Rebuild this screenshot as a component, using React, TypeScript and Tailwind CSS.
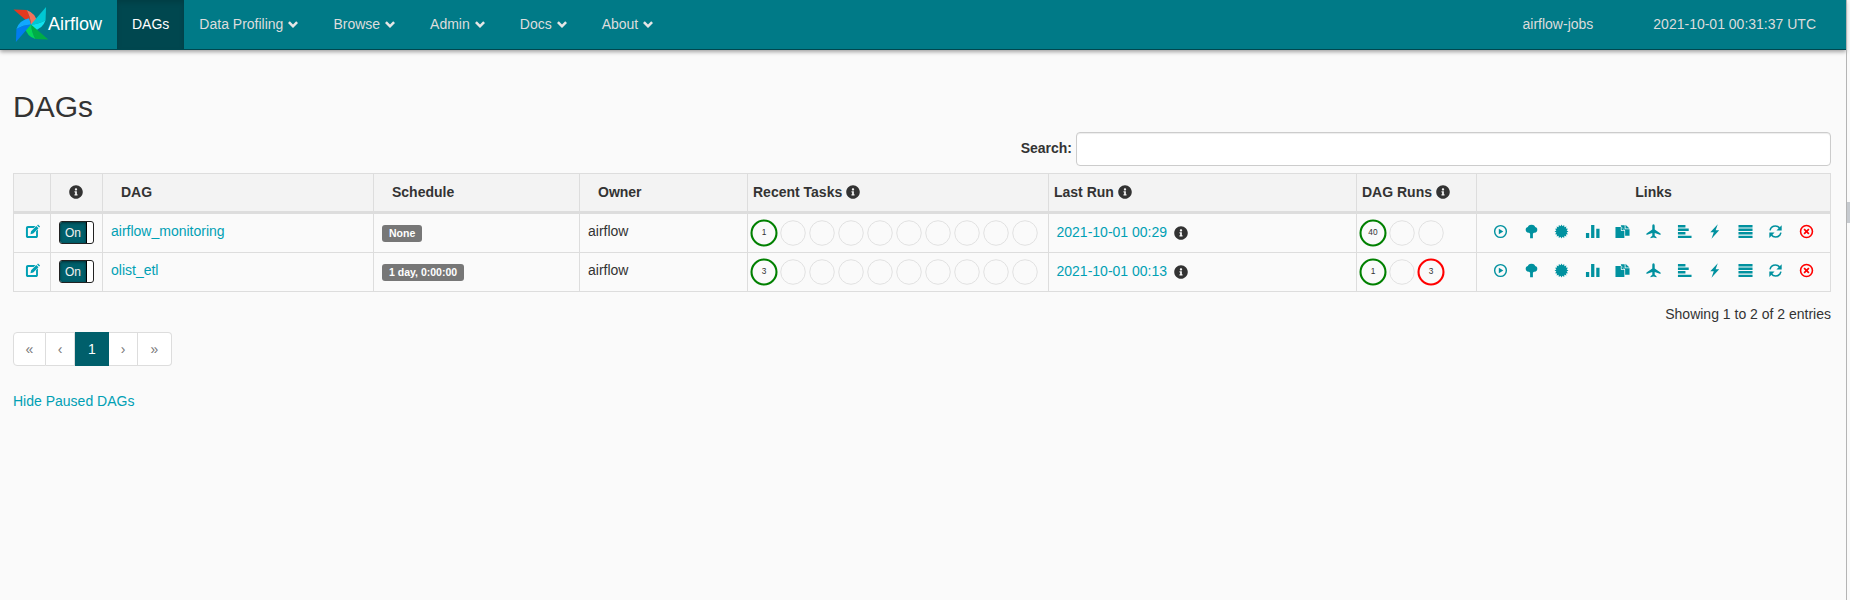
import React from "react";
import { FaInfoCircle } from "react-icons/fa";

const font = "font-['Liberation_Sans',Arial,sans-serif]";
const teal = "text-[#00a0b4]";

const Info = ({ className = "" }: { className?: string }) => (
  <FaInfoCircle className={`inline-block w-[14px] h-[14px] text-[#333] ${className}`} />
);

const NavItem = ({ label, caret, active }: { label: string; caret?: boolean; active?: boolean }) => (
  <div className={`h-[49px] flex items-center pl-[15px] text-[14px] ${caret ? "pr-[18px]" : "pr-[15px]"} ${active ? "bg-[#00474f] text-white shadow-[inset_0_3px_5px_#00000020]" : "text-[#dddddd]"}`}>
    {label}
    {caret && (
      <svg viewBox="0 0 14 14" className="w-[14px] h-[14px] ml-[3px] text-[#e6e6e6]" fill="currentColor">
        <polygon points="2,5 3.800,3.200 7,6.400 10.200,3.200 12,5 7,10" />
      </svg>
    )}
  </div>
);

const Blade = ({ angle, dark, light }: { angle: number; dark: string; light: string }) => (
  <g transform={`rotate(${angle} 18.500 18)`}>
    <path d="M18.500 18 L0.500 2.500 L14 3 Q18 10 18.500 18 Z" fill={dark} />
    <path d="M14 3 Q23 6 25 16 L18.500 18 Q18 10 14 3 Z" fill={light} />
  </g>
);

const Logo = () => (
  <svg viewBox="0 0 36 36" className="w-[35px] h-[35px] shrink-0">
    <Blade angle={0} dark="#e43921" light="#f4725b" />
    <Blade angle={90} dark="#00c7d4" light="#11e1ee" />
    <Blade angle={180} dark="#00ad46" light="#04d659" />
    <Blade angle={270} dark="#017cee" light="#11a8ff" />
  </svg>
);

const Circle = ({ n, color }: { n?: string; color?: "g" | "r" }) => (
  <div
    className={`w-[26px] h-[26px] shrink-0 rounded-full flex items-center justify-center text-[8px] text-[#333] ${
      color === "g"
        ? "border-2 border-[#008000] scale-[1.04]"
        : color === "r"
        ? "border-2 border-[#ff0000] scale-[1.04]"
        : "border border-[#e0e0e0] scale-[0.98]"
    }`}
  >
    {n}
  </div>
);

const Glyph = ({ children, red }: { children: React.ReactNode; red?: boolean }) => (
  <svg viewBox="0 0 16 16" className={`w-[15px] h-[15px] shrink-0 ${red ? "text-[#ff0000]" : "text-[#00919f]"}`} fill="currentColor">
    {children}
  </svg>
);

const burst = Array.from({ length: 32 })
  .map((_, i) => {
    const r = i % 2 === 0 ? 7.4 : 5.6;
    const a = (i * Math.PI) / 16;
    return `${(8 + r * Math.cos(a)).toFixed(2)},${(8 + r * Math.sin(a)).toFixed(2)}`;
  })
  .join(" ");

const links = [
  <Glyph key="1"><path fillRule="evenodd" d="M8 1a7 7 0 1 0 0 14A7 7 0 0 0 8 1Zm0 1.500a5.500 5.500 0 1 1 0 11 5.500 5.500 0 0 1 0-11Z" /><path d="M6.200 5v6L11 8Z" /></Glyph>,
  <Glyph key="2">
    <circle cx="8" cy="4.900" r="4.200" />
    <circle cx="4.800" cy="6.200" r="3" />
    <circle cx="11.200" cy="6.200" r="3" />
    <circle cx="8" cy="7.500" r="3" />
    <path d="M6.500 9h3v6.200h-3Z" />
  </Glyph>,
  <Glyph key="3"><polygon points={burst} /></Glyph>,
  <Glyph key="4"><path d="M1 9.500h3.500V15H1Zm5.500-8.500H10v14H6.500Zm5.500 4h3.500v10H12Z" /></Glyph>,
  <Glyph key="5"><path d="M.5 3.200h5.700v3.400c0 .5.400.9.900.9h2.900V15H.5Z" /><path d="M7 3.200l2.800 3.400H7Z" /><path d="M6.300 1.200h4v4.400h5.200v6.900h-4.700V6.800L6.300 2.300Z" /><path d="M11.200.8l4.200 3.900h-4.200Z" /></Glyph>,
  <Glyph key="6"><path d="M8 .2c.9 0 1.300 1 1.300 2.100V5.800L15.500 10v1.800L9.300 9.600v3L11.200 14v1.300L8 14.400l-3.200.9V14l1.900-1.400v-3L.5 11.800V10l6.200-4.200V2.300C6.700 1.200 7.100.2 8 .2Z" /></Glyph>,
  <Glyph key="7"><path d="M1 1h8v2.600H1Zm0 3.800h11.500v2.600H1Zm0 3.800h8v2.600H1Zm0 3.800h14.500V15H1Z" /></Glyph>,
  <Glyph key="8"><path d="M11.500.3 3.500 8.800h3.700L4.800 15.700 13 6.600H9.200Z" /></Glyph>,
  <Glyph key="9"><path d="M.5 1h15v2.600H.5Zm0 3.800h15v2.600H.5Zm0 3.800h15v2.600H.5Zm0 3.800h15V15H.5Z" /></Glyph>,
  <Glyph key="10">
    <path d="M2.200 6.800C2.800 4 5.200 2.200 8 2.200c1.800 0 3.300.7 4.300 2" fill="none" stroke="currentColor" strokeWidth="1.700" />
    <path d="M14.600 1.200V7H9Z" />
    <path d="M13.800 9.200C13.200 12 10.800 13.800 8 13.800c-1.800 0-3.300-.7-4.300-2" fill="none" stroke="currentColor" strokeWidth="1.700" />
    <path d="M1.400 14.800V9H7Z" />
  </Glyph>,
  <Glyph key="11" red><path fillRule="evenodd" d="M8 .8a7.200 7.200 0 1 0 0 14.400A7.200 7.200 0 0 0 8 .8Zm0 1.700a5.500 5.500 0 1 1 0 11 5.500 5.500 0 0 1 0-11Z" /><path d="M6.100 4.800 8 6.700l1.900-1.900 1.300 1.300L9.300 8l1.900 1.900-1.300 1.300L8 9.300l-1.900 1.900-1.300-1.300L6.700 8 4.800 6.100Z" /></Glyph>,
];

const th = "border border-[#ddd] border-b-[3px] bg-[#f3f3f3] font-bold text-[14px] text-[#333] py-0 align-middle";
const td = "border border-[#ddd] text-[14px] text-[#333] align-middle p-0";

const Row = ({ name, sched, task, last, runs }: { name: string; sched: string; task: string; last: string; runs: React.ReactNode }) => (
  <tr className="h-[39.500px]">
    <td className={`${td} text-center`}>
      <svg viewBox="0 0 16 16" className={`inline-block w-[15px] h-[15px] ${teal} relative top-[-2px]`} fill="currentColor">
        <path d="M3 2.200h8.200L9.200 4.200H3.600c-.3 0-.5.2-.5.500v7.700c0 .3.200.5.500.5h7.700c.3 0 .5-.2.500-.5V7.600l2-2v7.400c0 1.100-.9 2-2 2H3c-1.100 0-2-.9-2-2V4.200c0-1.100.9-2 2-2Z" />
        <path d="M5.800 10.800l.7-3 5.600-5.600 2.300 2.300-5.600 5.600ZM12.900 1.500l1-1 2.200 2.200-1 1Z" />
      </svg>
    </td>
    <td className={`${td} text-center`}>
      <div className="inline-flex w-[35px] h-[23px] rounded-[3px] border border-[#222] bg-white overflow-hidden align-middle">
        <div className="w-[27px] h-full bg-[#005f6b] border-r border-black text-[#f0f0f0] text-[12px] flex items-center justify-center shadow-[inset_0_1px_3px_#00000080]">On</div>
      </div>
    </td>
    <td className={`${td} pl-[8px] pb-[2px]`}><span className={teal}>{name}</span></td>
    <td className={`${td} pl-[8px]`}>
      <span className="inline-block bg-[#777] text-white font-bold text-[10.500px] leading-[17px] h-[17px] px-[7px] rounded-[3px] align-middle">{sched}</span>
    </td>
    <td className={`${td} pl-[8px] pb-[2px]`}>airflow</td>
    <td className={`${td} pl-[3px]`}>
      <div className="flex gap-[3px]">
        <Circle n={task} color="g" />
        {Array.from({ length: 9 }).map((_, i) => <Circle key={i} />)}
      </div>
    </td>
    <td className={`${td} pl-[7.500px]`}>
      <span className={teal}>{last}</span>
      <Info className="ml-[7px] relative top-[-1px]" />
    </td>
    <td className={`${td} pl-[3px]`}><div className="flex gap-[3px]">{runs}</div></td>
    <td className={`${td} pb-[3px]`}>
      <div className="flex justify-between pl-[16px] pr-[16px]">{links}</div>
    </td>
  </tr>
);

export default function App() {
  return (
    <div className={`${font} flex min-h-[600px] bg-[#fafafa] text-[#333] overflow-hidden`}>
      <div className="w-[1846px] shrink-0">
        <nav className="h-[50px] bg-[#007a87] border-b border-[#00474f] shadow-[0_2px_4px_#00000059] flex items-center">
          <div className="flex items-center w-[117px] pl-[13px]">
            <Logo />
            <span className="text-[18px] text-white">Airflow</span>
          </div>
          <NavItem label="DAGs" active />
          <NavItem label="Data Profiling" caret />
          <NavItem label="Browse" caret />
          <NavItem label="Admin" caret />
          <NavItem label="Docs" caret />
          <NavItem label="About" caret />
          <div className="ml-auto flex text-[14px] text-[#dcdcdc]">
            <span className="mr-[60px]">airflow-jobs</span>
            <span className="mr-[30px]">2021-10-01 00:31:37 UTC</span>
          </div>
        </nav>

        <main className="w-[1818px] ml-[13px]">
          <h2 className="text-[30px] leading-[33px] font-normal text-[#333] mt-[40px]">DAGs</h2>
          <div className="flex items-center justify-end mt-[9px] h-[34px]">
            <label className="text-[14px] font-bold mr-[4px] pb-[2px]">Search:</label>
            <input className="w-[755px] h-[34px] bg-white border border-[#ccc] rounded-[4px] shadow-[inset_0_1px_1px_#00000013]" />
          </div>
          <table className="w-full mt-[7px] table-fixed border-collapse">
            <thead>
              <tr className="h-[39px]">
                <th className={`${th} w-[37px]`} />
                <th className={`${th} w-[52px] pr-[2px]`}><Info className="relative top-[-1px]" /></th>
                <th className={`${th} w-[271px] text-left pl-[18px]`}>DAG</th>
                <th className={`${th} w-[206px] text-left pl-[18px]`}>Schedule</th>
                <th className={`${th} w-[168px] text-left pl-[18px]`}>Owner</th>
                <th className={`${th} w-[301px] text-left pl-[5px]`}>Recent Tasks <Info className="relative top-[-1px]" /></th>
                <th className={`${th} w-[308px] text-left pl-[5px]`}>Last Run <Info className="relative top-[-1px]" /></th>
                <th className={`${th} w-[120px] text-left pl-[5px]`}>DAG Runs <Info className="relative top-[-1px]" /></th>
                <th className={`${th} text-center`}>Links</th>
              </tr>
            </thead>
            <tbody>
              <Row name="airflow_monitoring" sched="None" task="1" last="2021-10-01 00:29" runs={<><Circle n="40" color="g" /><Circle /><Circle /></>} />
              <Row name="olist_etl" sched="1 day, 0:00:00" task="3" last="2021-10-01 00:13" runs={<><Circle n="1" color="g" /><Circle /><Circle n="3" color="r" /></>} />
            </tbody>
          </table>
          <div className="text-right text-[14px] mt-[12px] leading-[20px]">Showing 1 to 2 of 2 entries</div>
          <div className="flex mt-[8px] text-[14px] text-[#777]">
            <div className="w-[33px] h-[34px] flex items-center justify-center bg-white border border-[#ddd] rounded-l-[4px]">«</div>
            <div className="w-[29px] h-[34px] flex items-center justify-center bg-white border border-l-0 border-[#ddd]">‹</div>
            <div className="w-[34px] h-[34px] flex items-center justify-center bg-[#005f6b] text-white">1</div>
            <div className="w-[29px] h-[34px] flex items-center justify-center bg-white border border-l-0 border-[#ddd]">›</div>
            <div className="w-[34px] h-[34px] flex items-center justify-center bg-white border border-l-0 border-[#ddd] rounded-r-[4px]">»</div>
          </div>
          <div className={`text-[14px] mt-[25px] ${teal}`}>Hide Paused DAGs</div>
        </main>
      </div>
      <aside className="flex-1 border-l border-[#b4b4b4] pt-[202px]">
        <div className="h-[21px] bg-[#c6cacf]" />
      </aside>
    </div>
  );
}
